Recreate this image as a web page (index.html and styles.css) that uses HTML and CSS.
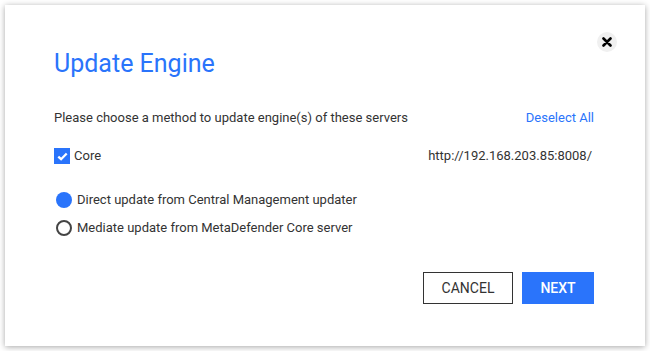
FILE: index.html
```html
<!doctype html>
<html lang="en">
	<head>
		<meta http-equiv="Content-Type" content="text/html; charset=utf-8">
		<title>Update Engine</title>
		<meta name="viewport" content="width=device-width, initial-scale=1.0">
		<link rel="stylesheet" href="styles.css">
	</head>
	<body>
	<div class="dialog">
		<button class="close" type="button">
			<svg width="10" height="10" viewBox="0 0 10 10"><path d="M1.5 1.5L8.5 8.5M8.5 1.5L1.5 8.5" stroke="#000" stroke-width="2.6" stroke-linecap="round"/></svg>
		</button>
		<h1 class="title">Update Engine</h1>
		<div class="row intro">
			<span>Please choose a method to update engine(s) of these servers</span>
			<a class="link" href="#">Deselect All</a>
		</div>
		<div class="row server">
			<label class="check">
				<span class="box">
					<svg width="11" height="9" viewBox="0 0 11 9"><path d="M1.3 4.6L4.1 7.2L9.7 1.5" fill="none" stroke="#fff" stroke-width="2.3"/></svg>
				</span>
				Core
			</label>
			<span class="url">http://192.168.203.85:8008/</span>
		</div>
		<ul class="options">
			<li><span class="radio on"></span>Direct update from Central Management updater</li>
			<li><span class="radio"></span>Mediate update from MetaDefender Core server</li>
		</ul>
		<div class="actions">
			<button class="btn cancel" type="button">CANCEL</button>
			<button class="btn next" type="button">NEXT</button>
		</div>
	</div>
	</body>
</html>
```

FILE: styles.css
```css
*{margin: 0;padding: 0;box-sizing: border-box;}
ul li{list-style: none;}
a{ text-decoration:none;}

body{
	background: #fff;
	padding: 5px;
	font-family: Roboto, "Liberation Sans", sans-serif;
	font-size: 13px;
	color: #333;
}
.dialog{
	position: relative;
	width: 640px;
	height: 341px;
	padding: 45px 51px 0 49px;
	background: #fff;
	box-shadow: 0 1px 6px rgba(0,0,0,.35);
}
.close{
	position: absolute;
	top: 27px;
	right: 28px;
	width: 20px;
	height: 20px;
	border: 0;
	border-radius: 50%;
	background: #f0f0f0;
	display: flex;
	align-items: center;
	justify-content: center;
}
.title{
	font-size: 25px;
	line-height: 28px;
	font-weight: 400;
	color: #2a74fb;
}
.row{
	display: flex;
	justify-content: space-between;
	align-items: center;
	line-height: 20px;
}
.intro{
	margin-top: 30px;
}
.link{
	color: #2a74fb;
}
.server{
	margin-top: 18px;
}
.check{
	display: flex;
	align-items: center;
	gap: 4px;
}
.box{
	width: 16px;
	height: 16px;
	background: #2a74fb;
	display: flex;
	align-items: center;
	justify-content: center;
}
.url{
	margin-right: 2px;
}
.options{
	margin-top: 24px;
	display: flex;
	flex-direction: column;
	gap: 8px;
}
.options li{
	display: flex;
	align-items: center;
	gap: 5px;
	line-height: 20px;
}
.radio{
	width: 16px;
	height: 16px;
	margin-left: 2px;
	border-radius: 50%;
	border: 2px solid #444;
}
.radio.on{
	border: 0;
	background: #2a74fb;
}
.actions{
	margin-top: 34px;
	display: flex;
	justify-content: flex-end;
	gap: 9px;
}
.btn{
	height: 32px;
	font-family: Roboto, "Liberation Sans", sans-serif;
	font-size: 14px;
}
.cancel{
	width: 90px;
	background: #fff;
	border: 1px solid #333;
	color: #333;
}
.next{
	width: 72px;
	background: #2a74fb;
	border: 0;
	color: #fff;
	font-weight: 500;
}
```
